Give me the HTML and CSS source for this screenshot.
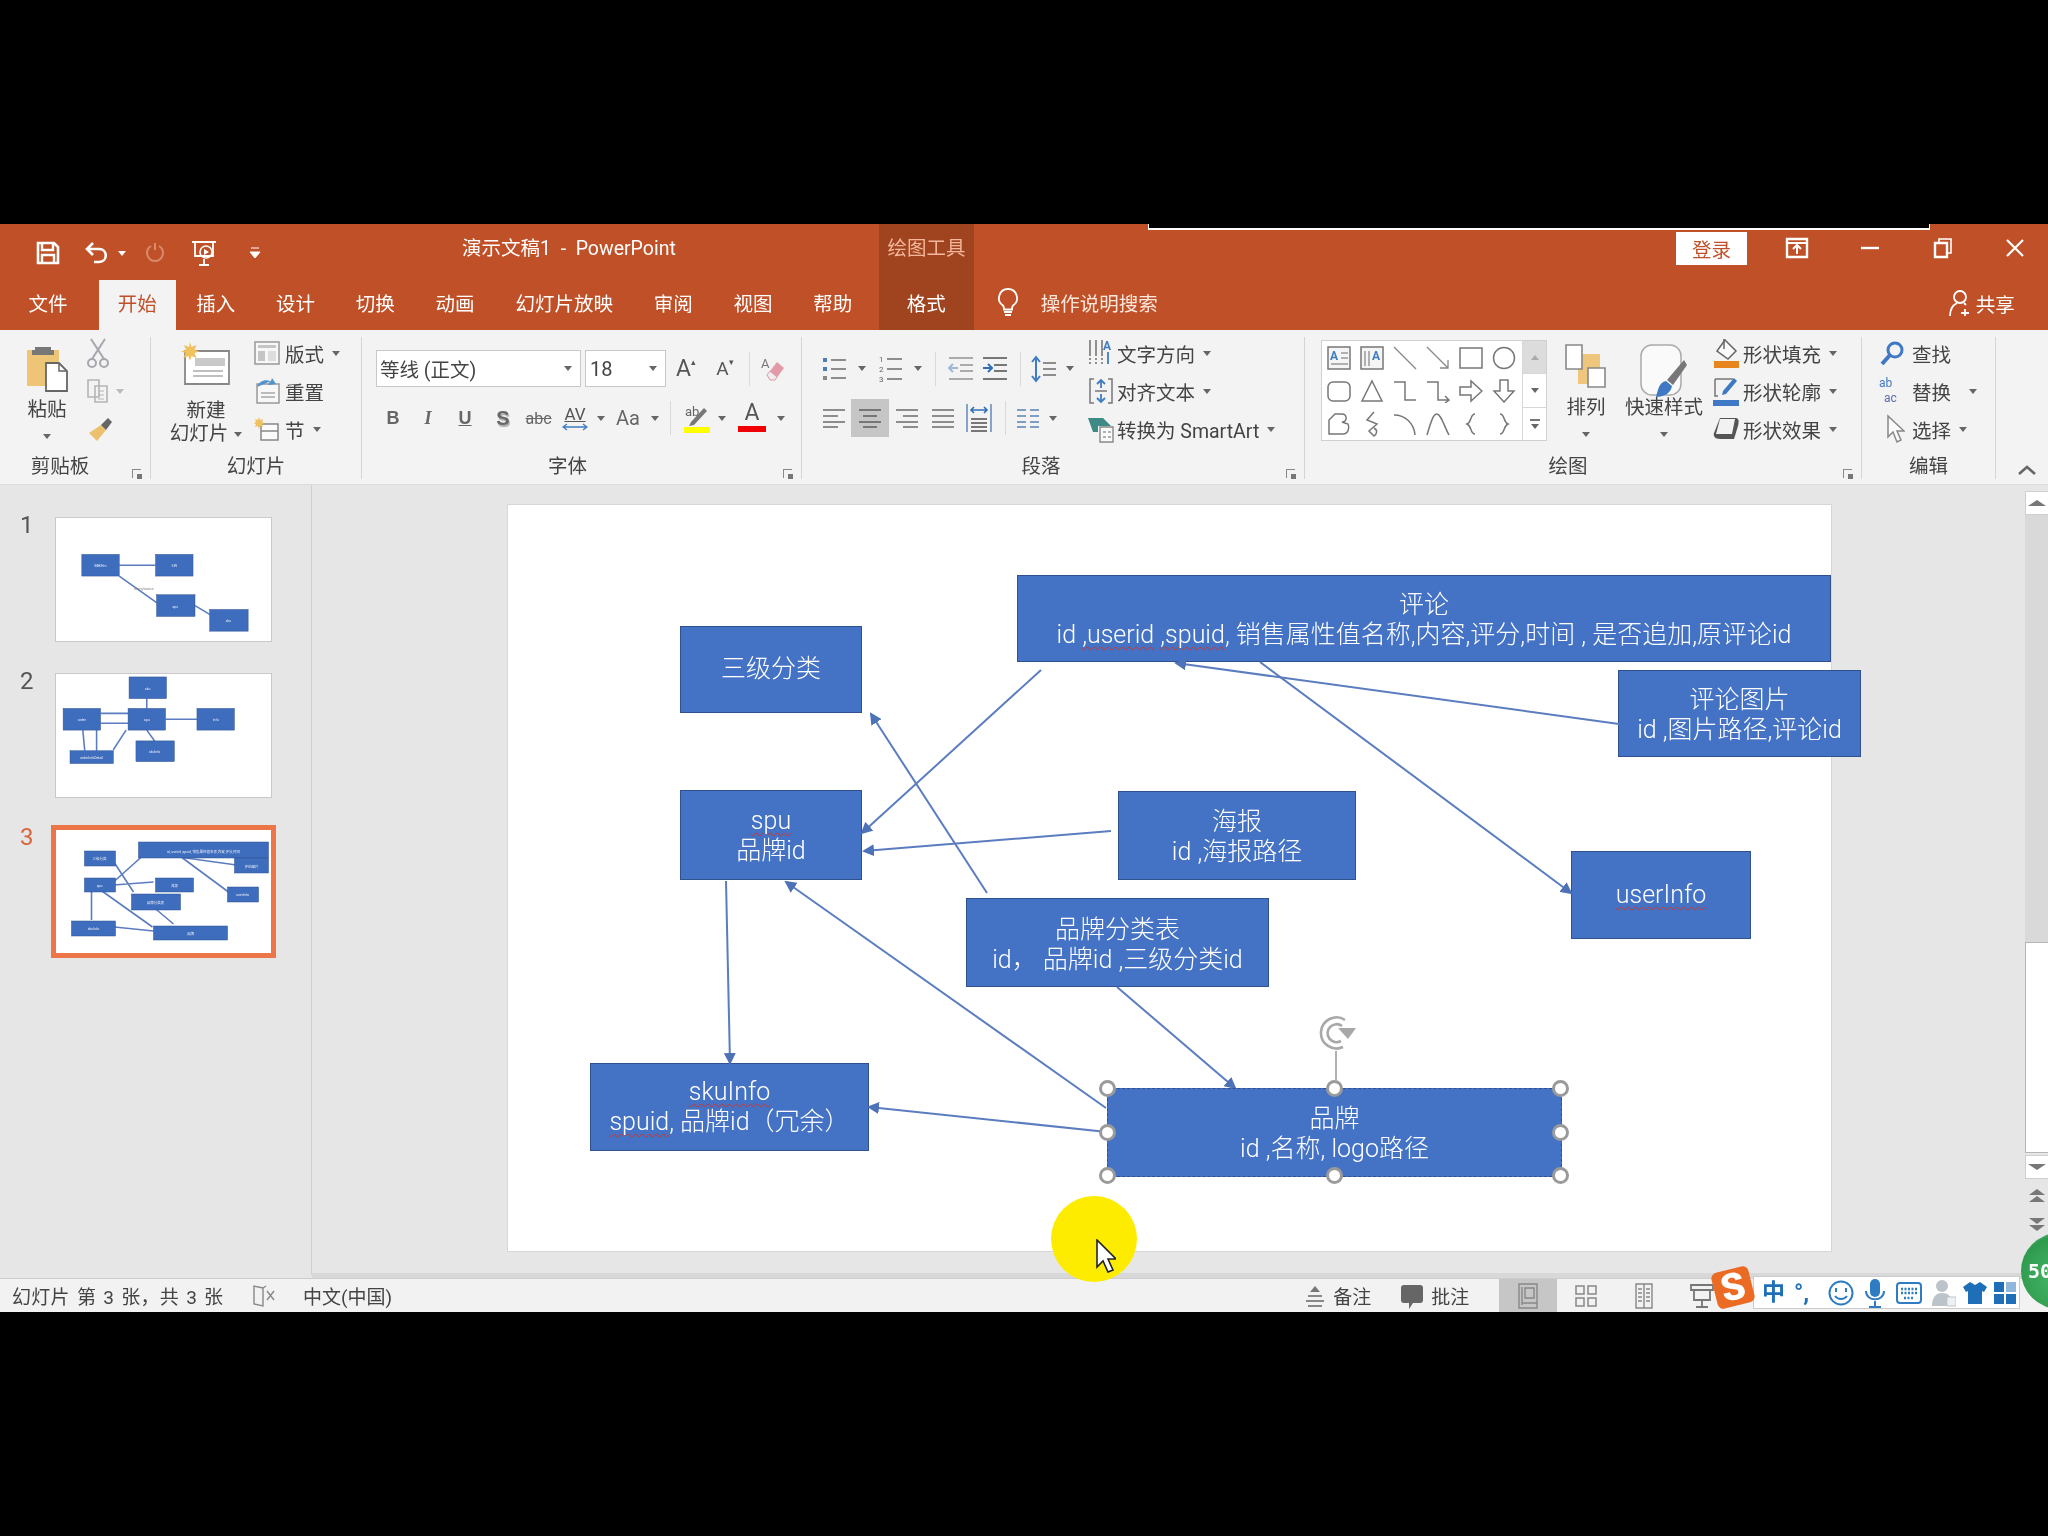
FILE: index.html
```html
<!DOCTYPE html>
<html lang="zh-CN">
<head>
    <meta charset="UTF-8">
    <title>演示文稿1 - PowerPoint</title>
    <link rel="stylesheet" href="styles.css">
</head>
<body>
<div class="window">
    <div class="topline"></div>

    <!-- 标题栏 -->
    <div class="titlebar">
        <div class="qat">
            <svg class="qat-save" width="24" height="24" viewBox="0 0 24 24"><path d="M2 2h16l4 4v16H2z" fill="none" stroke="#fff" stroke-width="2.6"/><path d="M6 2v7h11V2M6 22v-8h12v8" fill="none" stroke="#fff" stroke-width="2.4"/></svg>
            <svg class="qat-undo" width="26" height="24" viewBox="0 0 26 24"><path d="M8 2L2 8l6 6M3 8h11c9 0 9 13 0 13H9" fill="none" stroke="#fff" stroke-width="2.6"/></svg>
            <span class="qat-caret"></span>
            <svg class="qat-redo" width="20" height="24" viewBox="0 0 20 24"><path d="M6 5a8 8 0 1 0 8 0M10 2v7" fill="none" stroke="#d98a6c" stroke-width="2"/></svg>
            <svg class="qat-show" width="28" height="28" viewBox="0 0 28 28"><path d="M1 3h24M4 3v14h18V3M13 20v5M8 26h10" fill="none" stroke="#fff" stroke-width="1.8"/><circle cx="15" cy="13" r="6" fill="none" stroke="#fff" stroke-width="1.6"/><path d="M13 10l5 3-5 3z" fill="#fff"/></svg>
            <svg class="qat-more" width="12" height="14" viewBox="0 0 12 14"><path d="M2 2h8M1 6h10l-5 6z" fill="#fff" stroke="#fff"/></svg>
        </div>
        <div class="doc-title">演示文稿1&nbsp; -&nbsp; PowerPoint</div>
        <div class="context-head">绘图工具</div>
        <div class="win-ctrl">
            <button class="login">登录</button>
            <svg class="ctl-display" width="24" height="24" viewBox="0 0 24 24"><path d="M2 3h20v18H2z" fill="none" stroke="#fff" stroke-width="2.4"/><path d="M2 7h20" stroke="#fff" stroke-width="2"/><path d="M12 18v-8M8 13l4-4 4 4" fill="none" stroke="#fff" stroke-width="2"/></svg>
            <svg class="ctl-min" width="20" height="4" viewBox="0 0 20 4"><path d="M1 2h18" stroke="#fff" stroke-width="2.4"/></svg>
            <svg class="ctl-restore" width="20" height="22" viewBox="0 0 20 22"><path d="M2 6h12v14H2z" fill="none" stroke="#fff" stroke-width="2.4"/><path d="M6 6V2h12v14h-4" fill="none" stroke="#fff" stroke-width="1.6"/></svg>
            <svg class="ctl-close" width="20" height="20" viewBox="0 0 20 20"><path d="M2 2l16 16M18 2L2 18" stroke="#fff" stroke-width="2.2"/></svg>
        </div>
    </div>

    <!-- 选项卡 -->
    <div class="tabs">
        <a class="tab tab-file">文件</a>
        <a class="tab tab-active">开始</a>
        <a class="tab">插入</a>
        <a class="tab">设计</a>
        <a class="tab">切换</a>
        <a class="tab">动画</a>
        <a class="tab">幻灯片放映</a>
        <a class="tab">审阅</a>
        <a class="tab">视图</a>
        <a class="tab">帮助</a>
        <a class="tab tab-context">格式</a>
        <svg class="bulb" width="22" height="30" viewBox="0 0 22 30"><path d="M11 2a9 9 0 0 0-5 16.500c1 1 1 3 1 4h8c0-1 0-3 1-4A9 9 0 0 0 11 2z" fill="none" stroke="#fff" stroke-width="1.800"/><path d="M7 25h8M8 28h6" stroke="#fff" stroke-width="2"/></svg>
        <span class="tell-me">操作说明搜索</span>
        <div class="share">
            <svg width="26" height="28" viewBox="0 0 26 28"><circle cx="12" cy="8" r="6" fill="none" stroke="#fff" stroke-width="1.800"/><path d="M2 27c0-7 3-11 7-13M16 14l2 2M17 20v7M13 24h8" fill="none" stroke="#fff" stroke-width="1.800"/></svg>
            <span>共享</span>
        </div>
    </div>

    <!-- 功能区 -->
    <div class="ribbon">
        <section class="group g-clip">
            <div class="group-body">
                <div class="big-btn paste">
                    <svg class="big-icon" width="42" height="48" viewBox="0 0 42 48"><path d="M1 5h32v36H1z" fill="#eec477"/><path d="M9 5V2h16v3h3v5H6V5z" fill="#777"/><path d="M20 18h13l8 8v20H20z" fill="#fff" stroke="#666" stroke-width="1.800"/><path d="M33 18v8h8" fill="none" stroke="#666" stroke-width="1.500"/></svg>
                    <span class="big-label">粘贴</span>
                    <span class="big-caret"><i class="caret"></i></span>
                </div>
                <div class="col clip-tools">
                    <div class="row"><svg width="24" height="30" viewBox="0 0 24 30"><path d="M5 1l13 20M19 1L6 21" stroke="#a6a6ae" stroke-width="2" fill="none"/><circle cx="6" cy="25" r="4" fill="none" stroke="#a6a6ae" stroke-width="2"/><circle cx="18" cy="25" r="4" fill="none" stroke="#a6a6ae" stroke-width="2"/></svg></div>
                    <div class="row copy-row"><svg width="24" height="26" viewBox="0 0 24 26"><path d="M2 2h11v17H2zM9 8h12v16H9z" fill="#f3f3f3" stroke="#b5b5b5" stroke-width="1.600"/><path d="M12 13h6M12 17h6M12 21h6" stroke="#b5b5b5"/></svg><i class="caret caret-faint"></i></div>
                    <div class="row"><svg width="28" height="28" viewBox="0 0 28 28"><path d="M15 10l5 5-9 11L3 18z" fill="#ecc06d"/><path d="M15 10l7-7 4 4-6 8z" fill="#666"/></svg></div>
                </div>
            </div>
            <div class="group-label has-launcher">剪贴板<i class="launcher"></i></div>
        </section>

        <section class="group g-slides">
            <div class="group-body">
                <div class="big-btn new-slide">
                    <svg class="big-icon" width="50" height="44" viewBox="0 0 50 44"><path d="M4 9h44v33H4z" fill="#fff" stroke="#888" stroke-width="1.800"/><path d="M14 16h30v8H14z" fill="#c9c9c9"/><path d="M12 29h30M12 34h30" stroke="#aaa" stroke-width="1.500"/><path d="M9 0l1.500 5 5-2-2 5 5 1.500-5 1.500 2 5-5-2L9 19l-1.500-5-5 2 2-5L0 9.500l5-1.500-2-5 5 2z" fill="#f0c15c"/></svg>
                    <span class="big-label">新建</span>
                    <span class="big-label">幻灯片<i class="caret caret-in"></i></span>
                </div>
                <div class="col slide-tools">
                    <div class="row"><svg class="ico" width="26" height="24" viewBox="0 0 26 24"><path d="M1 1h24v22H1z" fill="#f7f7f7" stroke="#999" stroke-width="1.500"/><path d="M4 4h18v3H4zM4 10h7v10H4z" fill="#c5c5c5"/><path d="M14 10h8v10h-8z" fill="#ddd"/></svg><span>版式</span><i class="caret"></i></div>
                    <div class="row"><svg class="ico" width="26" height="26" viewBox="0 0 26 26"><path d="M3 6h22v19H3z" fill="#f7f7f7" stroke="#999" stroke-width="1.500"/><path d="M7 15h14M7 19h14" stroke="#bbb" stroke-width="2"/><path d="M3 9c2-6 8-8 13-6l-2 4 8-1-4-6-1 3" fill="#4f93cf"/></svg><span>重置</span></div>
                    <div class="row"><svg class="ico" width="26" height="26" viewBox="0 0 26 26"><path d="M7 8h17v16H7z" fill="#fbfbfb" stroke="#888" stroke-width="1.500"/><path d="M7 15h17" stroke="#888" stroke-width="1.500"/><path d="M5 1l1 3 3-1-1 3 3 1-3 1 1 3-3-1-1 3-1-3-3 1 1-3-3-1 3-1-1-3 3 1z" fill="#f0c15c"/></svg><span>节</span><i class="caret"></i></div>
                </div>
            </div>
            <div class="group-label">幻灯片</div>
        </section>

        <section class="group g-font">
            <div class="group-body stack">
                <div class="line font-line">
                    <div class="select font-name"><span>等线 (正文)</span><i class="caret"></i></div>
                    <div class="select font-size"><span>18</span><i class="caret"></i></div>
                    <span class="cell glyph-a">A<sup>▴</sup></span>
                    <span class="cell glyph-a glyph-small">A<sup>▾</sup></span>
                    <i class="sep"></i>
                    <span class="cell"><svg width="26" height="28" viewBox="0 0 26 28"><text x="1" y="13" class="eraser-a">A</text><path d="M7 20l10-13 7 6-9 12H10z" fill="#e29aa7"/><path d="M7 20l3-4 7 6-2 3h-5z" fill="#eee" stroke="#e29aa7"/></svg></span>
                </div>
                <div class="line format-line">
                    <span class="cell fmt fmt-b">B</span>
                    <span class="cell fmt fmt-i">I</span>
                    <span class="cell fmt fmt-u">U</span>
                    <span class="cell fmt fmt-s">S</span>
                    <span class="cell fmt-abc">abc</span>
                    <span class="cell av">AV<svg width="26" height="8" viewBox="0 0 26 8"><path d="M1 4h24M5 1L1 4l4 3M21 1l4 3-4 3" fill="none" stroke="#3f7cc0" stroke-width="1.300"/></svg></span>
                    <span class="cell"><i class="caret"></i></span>
                    <span class="cell fmt-aa">Aa</span>
                    <span class="cell"><i class="caret"></i></span>
                    <i class="sep"></i>
                    <span class="cell"><svg width="30" height="32" viewBox="0 0 30 32"><text x="3" y="14" class="hl-text">ab</text><path d="M9 20L22 6l3 3-13 14-5 1z" fill="#777"/><path d="M2 25h26v6H2z" fill="#ffff00"/></svg></span>
                    <span class="cell"><i class="caret"></i></span>
                    <span class="cell color-a">A</span>
                    <span class="cell"><i class="caret"></i></span>
                </div>
            </div>
            <div class="group-label has-launcher">字体<i class="launcher"></i></div>
        </section>

        <section class="group g-para">
            <div class="group-body para-body">
                <div class="stack para-left">
                    <div class="line para-line1">
                        <span class="cell"><svg width="26" height="26" viewBox="0 0 26 26"><path d="M9 4h15M9 13h15M9 22h15" stroke="#8d8d8d" stroke-width="2"/><path d="M1 2h4v4H1zM1 11h4v4H1z" fill="#4d7cb8"/><path d="M1 20h4v4H1z" fill="#888"/></svg></span>
                        <span class="cell"><i class="caret"></i></span>
                        <span class="cell"><svg width="26" height="30" viewBox="0 0 26 30"><path d="M9 5h15M9 15h15M9 25h15" stroke="#8d8d8d" stroke-width="2"/><text x="1" y="8" class="num-mark">1</text><text x="1" y="18" class="num-mark">2</text><text x="1" y="28" class="num-mark">3</text></svg></span>
                        <span class="cell"><i class="caret"></i></span>
                        <i class="sep"></i>
                        <span class="cell"><svg width="26" height="26" viewBox="0 0 26 26"><path d="M1 2h24M12 9h13M12 15h13M1 23h24" stroke="#aaa" stroke-width="2"/><path d="M10 12H2M5 8l-4 4 4 4" fill="none" stroke="#9fb8d6" stroke-width="2"/></svg></span>
                        <span class="cell"><svg width="26" height="26" viewBox="0 0 26 26"><path d="M1 2h24M12 9h13M12 15h13M1 23h24" stroke="#777" stroke-width="2"/><path d="M1 12h8M6 8l4 4-4 4" fill="none" stroke="#2f6fb5" stroke-width="2"/></svg></span>
                        <i class="sep"></i>
                        <span class="cell"><svg width="26" height="28" viewBox="0 0 26 28"><path d="M12 8h13M12 14h13M12 20h13" stroke="#8d8d8d" stroke-width="2"/><path d="M5 3v22M1 7l4-5 4 5M1 21l4 5 4-5" fill="none" stroke="#3f7cc0" stroke-width="2"/></svg></span>
                        <span class="cell"><i class="caret"></i></span>
                    </div>
                    <div class="line para-line2">
                        <span class="cell"><svg width="22" height="20" viewBox="0 0 22 20"><path d="M0 2h22M0 8h15M0 14h22M0 19h15" stroke="#8d8d8d" stroke-width="1.800"/></svg></span>
                        <span class="cell align-on"><svg width="22" height="20" viewBox="0 0 22 20"><path d="M0 2h22M4 8h14M0 14h22M4 19h14" stroke="#777" stroke-width="1.800"/></svg></span>
                        <span class="cell"><svg width="22" height="20" viewBox="0 0 22 20"><path d="M0 2h22M7 8h15M0 14h22M7 19h15" stroke="#8d8d8d" stroke-width="1.800"/></svg></span>
                        <span class="cell"><svg width="22" height="20" viewBox="0 0 22 20"><path d="M0 2h22M0 8h22M0 14h22M0 19h22" stroke="#8d8d8d" stroke-width="1.800"/></svg></span>
                        <span class="cell"><svg width="26" height="30" viewBox="0 0 26 30"><path d="M1 1v28M25 1v28" stroke="#7a9cc6" stroke-width="1.800"/><path d="M5 16h16M5 20h16M5 24h16M5 28h16" stroke="#777" stroke-width="1.800"/><path d="M5 7h16M8 4L5 7l3 3M18 4l3 3-3 3" fill="none" stroke="#2f6fb5" stroke-width="1.600"/></svg></span>
                        <i class="sep"></i>
                        <span class="cell"><svg width="22" height="20" viewBox="0 0 22 20"><path d="M0 2h9M13 2h9M0 8h9M13 8h9M0 14h9M13 14h9M0 19h9M13 19h9" stroke="#7f9ec4" stroke-width="1.800"/></svg></span>
                        <span class="cell"><i class="caret"></i></span>
                    </div>
                </div>
                <div class="col para-right">
                    <div class="row"><svg class="ico" width="26" height="30" viewBox="0 0 26 30"><path d="M2 2v24M8 2v24M14 2v24" stroke="#777" stroke-width="1.600" stroke-dasharray="16 2 2 2"/><text x="15" y="12" class="dir-a">A</text><path d="M20 14v12" stroke="#3f7cc0" stroke-width="1.800"/></svg><span>文字方向</span><i class="caret"></i></div>
                    <div class="row"><svg class="ico" width="26" height="28" viewBox="0 0 26 28"><path d="M6 2H2v24h4M20 2h4v24h-4" fill="none" stroke="#777" stroke-width="1.500"/><path d="M13 3v8M9 7l4-4 4 4M13 25v-8M9 21l4 4 4-4" fill="none" stroke="#3f7cc0" stroke-width="1.800"/><path d="M7 14h12" stroke="#777" stroke-width="1.500"/></svg><span>对齐文本</span><i class="caret"></i></div>
                    <div class="row"><svg class="ico" width="26" height="30" viewBox="0 0 26 30"><path d="M0 4h15l8 8H10v6H5z" fill="#3e8a84"/><path d="M12 13h13v15H12z" fill="#fafafa" stroke="#888" stroke-width="1.400"/><path d="M15 18h3M20 18h3M15 23h3M20 23h3" stroke="#999" stroke-width="1.500"/></svg><span>转换为 SmartArt</span><i class="caret"></i></div>
                </div>
            </div>
            <div class="group-label has-launcher">段落<i class="launcher"></i></div>
        </section>

        <section class="group g-draw">
            <div class="group-body draw-body">
                <div class="gallery">
                    <div class="shapes">
                        <svg width="24" height="24" viewBox="0 0 24 24"><path d="M1 1h22v22H1z" fill="#f5f5f5" stroke="#777" stroke-width="1.500"/><path d="M14 7h7M14 12h7M4 18h17" stroke="#999" stroke-width="1.500"/><text x="3" y="14" class="dir-a">A</text></svg>
                        <svg width="24" height="24" viewBox="0 0 24 24"><path d="M1 1h22v22H1z" fill="#f5f5f5" stroke="#777" stroke-width="1.500"/><path d="M5 5v15M9 5v15" stroke="#999" stroke-width="1.500"/><text x="12" y="14" class="dir-a">A</text></svg>
                        <svg width="24" height="24" viewBox="0 0 24 24"><path d="M1 1l22 22" stroke="#888" stroke-width="1.300"/></svg>
                        <svg width="24" height="24" viewBox="0 0 24 24"><path d="M1 1l21 21M22 14v8h-8" fill="none" stroke="#888" stroke-width="1.300"/></svg>
                        <svg width="26" height="24" viewBox="0 0 26 24"><path d="M2 2h22v20H2z" fill="none" stroke="#777" stroke-width="1.500"/></svg>
                        <svg width="24" height="24" viewBox="0 0 24 24"><circle cx="12" cy="12" r="10.500" fill="none" stroke="#777" stroke-width="1.500"/></svg>
                        <svg width="26" height="24" viewBox="0 0 26 24"><rect x="2" y="3" width="22" height="19" rx="5" fill="none" stroke="#777" stroke-width="1.500"/></svg>
                        <svg width="24" height="24" viewBox="0 0 24 24"><path d="M12 2l10 20H2z" fill="none" stroke="#777" stroke-width="1.500"/></svg>
                        <svg width="24" height="24" viewBox="0 0 24 24"><path d="M1 3h11v18h11" fill="none" stroke="#777" stroke-width="1.500"/></svg>
                        <svg width="24" height="24" viewBox="0 0 24 24"><path d="M1 3h11v18h10M19 17l4 4-4 3" fill="none" stroke="#777" stroke-width="1.500"/></svg>
                        <svg width="24" height="24" viewBox="0 0 24 24"><path d="M1 8h11V2l11 10-11 10v-6H1z" fill="none" stroke="#777" stroke-width="1.500"/></svg>
                        <svg width="24" height="24" viewBox="0 0 24 24"><path d="M8 1h8v11h6L12 23 2 12h6z" fill="none" stroke="#777" stroke-width="1.500"/></svg>
                        <svg width="24" height="24" viewBox="0 0 24 24"><path d="M2 22V8l6-6h7c5 0 6 8 0 8l6 2c2 4 0 10-5 10z" fill="none" stroke="#777" stroke-width="1.500"/></svg>
                        <svg width="20" height="26" viewBox="0 0 20 26"><path d="M12 1L5 9l10 4-8 7 5 5c3-2 4-6 0-8" fill="none" stroke="#777" stroke-width="1.500"/></svg>
                        <svg width="24" height="24" viewBox="0 0 24 24"><path d="M1 3c11 0 20 8 21 20" fill="none" stroke="#777" stroke-width="1.500"/></svg>
                        <svg width="24" height="24" viewBox="0 0 24 24"><path d="M1 23C5 10 7 2 11 2s7 12 12 21" fill="none" stroke="#777" stroke-width="1.500"/></svg>
                        <svg width="14" height="24" viewBox="0 0 14 24"><path d="M11 2C6 2 8 10 3 12c5 2 3 10 8 10" fill="none" stroke="#777" stroke-width="1.500"/></svg>
                        <svg width="14" height="24" viewBox="0 0 14 24"><path d="M3 2c5 0 3 8 8 10-5 2-3 10-8 10" fill="none" stroke="#777" stroke-width="1.500"/></svg>
                    </div>
                    <div class="gallery-scroll">
                        <span class="gs gs-up"><i class="caret caret-up"></i></span>
                        <span class="gs"><i class="caret"></i></span>
                        <span class="gs gs-more"><i class="bar"></i><i class="caret"></i></span>
                    </div>
                </div>
                <div class="big-btn arrange">
                    <svg class="big-icon" width="44" height="44" viewBox="0 0 44 44"><path d="M14 10h22v30H14z" fill="#efc77c"/><path d="M2 1h16v24H2z" fill="#fff" stroke="#888" stroke-width="1.600"/><path d="M24 24h17v19H24z" fill="#fff" stroke="#888" stroke-width="1.600"/></svg>
                    <span class="big-label">排列</span>
                    <span class="big-caret"><i class="caret"></i></span>
                </div>
                <div class="big-btn quick">
                    <svg class="big-icon" width="48" height="54" viewBox="0 0 48 54"><rect x="1" y="1" width="40" height="50" rx="11" fill="#fafafa" stroke="#aaa" stroke-width="1.500"/><path d="M44 16L27 36l6 5 14-20z" fill="#777"/><path d="M16 53c8 0 15-4 16-11l-6-5c-7 1-8 9-10 16z" fill="#3f78c4"/></svg>
                    <span class="big-label">快速样式</span>
                    <span class="big-caret"><i class="caret"></i></span>
                </div>
                <div class="col shape-style">
                    <div class="row"><svg class="ico" width="28" height="30" viewBox="0 0 28 30"><path d="M13 2l11 11-8 8-11-8z" fill="#fafafa" stroke="#666" stroke-width="1.500"/><path d="M12 1v10" stroke="#666" stroke-width="1.500"/><path d="M2 23h25v7H2z" fill="#e8861e"/></svg><span>形状填充</span><i class="caret"></i></div>
                    <div class="row"><svg class="ico" width="28" height="30" viewBox="0 0 28 30"><path d="M3 3h18M3 3v17h3" fill="none" stroke="#777" stroke-width="1.500"/><path d="M22 2l3 3-11 13-4 1 1-4z" fill="#3f78c4"/><path d="M1 24h26v6H1z" fill="#3f78c4"/></svg><span>形状轮廓</span><i class="caret"></i></div>
                    <div class="row"><svg class="ico" width="28" height="26" viewBox="0 0 28 26"><path d="M8 2h16c3 0 3 4 2 8l-4 13H8c-5 0-7-3-6-6z" fill="#555"/><path d="M8 3h15l-3 15H4z" fill="#f2f2f2"/></svg><span>形状效果</span><i class="caret"></i></div>
                </div>
            </div>
            <div class="group-label has-launcher draw-label">绘图<i class="launcher"></i></div>
        </section>

        <section class="group g-edit">
            <div class="group-body">
                <div class="col edit-col">
                    <div class="row"><svg class="ico" width="26" height="26" viewBox="0 0 26 26"><circle cx="16" cy="10" r="7" fill="none" stroke="#3f78c4" stroke-width="3"/><path d="M11 15L3 24" stroke="#3f78c4" stroke-width="4"/></svg><span>查找</span></div>
                    <div class="row"><span class="ico abac"><b>ab</b><b class="ac">ac</b></span><span>替换</span><i class="caret caret-far"></i></div>
                    <div class="row"><svg class="ico" width="26" height="30" viewBox="0 0 26 30"><path d="M9 2v21l5-5 4 10 4-2-4-9h7z" fill="#fafafa" stroke="#888" stroke-width="1.500"/></svg><span>选择</span><i class="caret"></i></div>
                </div>
            </div>
            <div class="group-label">编辑</div>
        </section>

        <svg class="collapse" width="20" height="12" viewBox="0 0 20 12"><path d="M2 10l8-7 8 7" fill="none" stroke="#666" stroke-width="2.500"/></svg>
    </div>

    <!-- 主区域 -->
    <div class="main">
        <aside class="thumbs">
            <div class="thumb-row">
                <span class="thumb-no">1</span>
                <svg class="thumb" viewBox="0 0 216 125">
                    <path class="tl" d="M63 48h37M63 59l38 27M140 89l15 9"/>
                    <rect class="tb" x="25" y="37" width="38" height="22"/><rect class="tb" x="100" y="37" width="38" height="22"/><rect class="tb" x="101" y="78" width="39" height="22"/><rect class="tb" x="155" y="93" width="39" height="22"/>
                    <text class="tt" x="44" y="50">BBKHm</text><text class="tt" x="119" y="50">SIN</text><text class="tt" x="120" y="91">spu</text><text class="tt" x="174" y="106">sku</text>
                    <text class="tg" x="88" y="73">Manytoone</text>
                </svg>
            </div>
            <div class="thumb-row">
                <span class="thumb-no">2</span>
                <svg class="thumb" viewBox="0 0 216 125">
                    <path class="tl" d="M44 40h28M44 50h28M26 57l2 21M40 57v21M70 57L57 77M91 57l8 11M110 46h32M91 25v10"/>
                    <rect class="tb" x="73" y="3" width="38" height="22"/><rect class="tb" x="6" y="35" width="38" height="22"/><rect class="tb" x="72" y="35" width="38" height="22"/><rect class="tb" x="142" y="35" width="38" height="22"/><rect class="tb" x="13" y="78" width="44" height="13"/><rect class="tb" x="80" y="68" width="39" height="21"/>
                    <text class="tt" x="92" y="16">sku</text><text class="tt" x="25" y="48">order</text><text class="tt" x="91" y="48">spu</text><text class="tt" x="161" y="48">info</text><text class="tt" x="35" y="86">orderInfoDetail</text><text class="tt" x="99" y="80">skuInfo</text>
                </svg>
            </div>
            <div class="thumb-row thumb-current">
                <span class="thumb-no">3</span>
                <svg class="thumb" viewBox="0 0 216 125">
                    <path class="tl" d="M87 27L58 53M123 26l50 37M181 36l-72-10M98 53l-40 3M78 63L59 34M99 79l19 16M36 61v30M97 98L45 61M98 102l-39-4"/>
                    <rect class="tb" x="29" y="22" width="31" height="15"/><rect class="tb" x="83" y="13" width="130" height="16"/><rect class="tb" x="179" y="29" width="34" height="15"/><rect class="tb" x="29" y="49" width="31" height="14"/><rect class="tb" x="100" y="49" width="38" height="14"/><rect class="tb" x="172" y="58" width="31" height="15"/><rect class="tb" x="76" y="65" width="49" height="16"/><rect class="tb" x="16" y="92" width="44" height="15"/><rect class="tb" x="98" y="97" width="74" height="14"/>
                    <text class="tt" x="44" y="31">三级分类</text><text class="tt" x="148" y="24">id ,userid ,spuid, 销售属性值名称,内容,评分,时间</text><text class="tt" x="196" y="39">评论图片</text><text class="tt" x="44" y="58">spu</text><text class="tt" x="119" y="58">海报</text><text class="tt" x="187" y="67">userInfo</text><text class="tt" x="100" y="75">品牌分类表</text><text class="tt" x="38" y="101">skuInfo</text><text class="tt" x="135" y="106">品牌</text>
                </svg>
            </div>
        </aside>

        <div class="canvas">
            <div class="slide">
                <svg class="links" width="1323" height="746" viewBox="0 0 1323 746">
                    <defs>
                        <marker id="tip" markerWidth="6" markerHeight="6" refX="5" refY="3" orient="auto"><path d="M0 0l6 3-6 3z" fill="#4e72b8"/></marker>
                    </defs>
                    <g class="link">
                        <path d="M533 165L354 328" marker-end="url(#tip)"/>
                        <path d="M752 157L1063 388" marker-end="url(#tip)"/>
                        <path d="M1111 219L668 158" marker-end="url(#tip)"/>
                        <path d="M603 326L356 346" marker-end="url(#tip)"/>
                        <path d="M479 388L363 209" marker-end="url(#tip)"/>
                        <path d="M609 482L727 583" marker-end="url(#tip)"/>
                        <path d="M218 376L222 558" marker-end="url(#tip)"/>
                        <path d="M598 603L278 377" marker-end="url(#tip)"/>
                        <path d="M599 627L361 602" marker-end="url(#tip)"/>
                    </g>
                </svg>
                <div class="node n-comment">评论<br>id <span class="sq">,userid</span> <span class="sq">,spuid</span>, 销售属性值名称,内容,评分,时间 , 是否追加,原评论id</div>
                <div class="node n-cat3">三级分类</div>
                <div class="node n-comment-img">评论图片<br>id ,图片路径,评论id</div>
                <div class="node n-spu"><span class="sq">spu</span><br>品牌id</div>
                <div class="node n-poster">海报<br>id ,海报路径</div>
                <div class="node n-user"><span class="sq">userInfo</span></div>
                <div class="node n-brandcat">品牌分类表<br>id， 品牌id ,三级分类id</div>
                <div class="node n-sku"><span class="sq">skuInfo</span><br><span class="sq">spuid</span>, 品牌id（冗余）</div>
                <div class="node n-brand">
                    品牌<br>id ,名称, logo路径
                    <i class="handle h-tl"></i><i class="handle h-tc"></i><i class="handle h-tr"></i>
                    <i class="handle h-ml"></i><i class="handle h-mr"></i>
                    <i class="handle h-bl"></i><i class="handle h-bc"></i><i class="handle h-br"></i>
                    <i class="stem"></i>
                    <svg class="rotate" width="40" height="36" viewBox="0 0 40 36"><path d="M28 5A15.500 15.500 0 1 0 26 32" fill="none" stroke="#a8a8a8" stroke-width="2.600"/><path d="M25 11A9 9 0 1 0 24 26" fill="none" stroke="#a8a8a8" stroke-width="2.600"/><path d="M21 13h18l-8 11z" fill="#a8a8a8"/></svg>
                </div>
            </div>
            <div class="vscroll">
                <span class="vs-btn"><i class="tri tri-up"></i></span>
                <span class="vs-track"></span>
                <span class="vs-thumb"></span>
                <span class="vs-btn"><i class="tri tri-down"></i></span>
                <span class="vs-page"><i class="tri tri-up"></i><i class="tri tri-up"></i></span>
                <span class="vs-page"><i class="tri tri-down"></i><i class="tri tri-down"></i></span>
            </div>
        </div>
    </div>

    <!-- 状态栏 -->
    <div class="status">
        <span class="st-count">幻灯片 第 3 张，共 3 张</span>
        <svg class="st-book" width="24" height="24" viewBox="0 0 24 24"><path d="M11 4L2 2v18l9 2zM11 4l3-2" fill="none" stroke="#888" stroke-width="1.400"/><path d="M15 7l7 9M22 7l-7 9" stroke="#888" stroke-width="1.400"/></svg>
        <span class="st-lang">中文(中国)</span>
        <div class="st-right">
            <span class="st-btn"><svg width="20" height="24" viewBox="0 0 20 24"><path d="M10 2l5 6H5z" fill="#777"/><path d="M3 12h14M1 17h18M3 22h14" stroke="#888" stroke-width="1.800"/></svg>备注</span>
            <span class="st-btn"><svg width="22" height="26" viewBox="0 0 22 26"><path d="M3 2h16c2 0 3 1 3 3v12c0 2-1 3-3 3h-7l-4 6v-6H3c-2 0-3-1-3-3V5c0-2 1-3 3-3z" fill="#666"/></svg>批注</span>
            <span class="view view-on"><svg width="20" height="26" viewBox="0 0 20 26"><path d="M1 1h18v24H1zM4 4v18M4 20h15" fill="none" stroke="#888" stroke-width="1.400"/><path d="M7 5h9v10H7z" fill="none" stroke="#888" stroke-width="1.400"/></svg></span>
            <span class="view"><svg width="22" height="22" viewBox="0 0 22 22"><path d="M1 1h8v8H1zM13 1h8v8h-8zM1 13h8v8H1zM13 13h8v8h-8z" fill="none" stroke="#888" stroke-width="1.500"/></svg></span>
            <span class="view"><svg width="18" height="26" viewBox="0 0 18 26"><path d="M1 1h16v24H1zM9 1v24M3 6h4M3 10h4M3 14h4M3 18h4M11 6h4M11 10h4M11 14h4M11 18h4" fill="none" stroke="#888" stroke-width="1.400"/></svg></span>
            <span class="view"><svg width="24" height="26" viewBox="0 0 24 26"><path d="M1 2h22v5H1zM4 7h16v10H4zM12 17v6M6 24h12" fill="none" stroke="#777" stroke-width="1.800"/></svg></span>
        </div>
    </div>

    <!-- 输入法状态条 -->
    <div class="ime">
        <span class="ime-zh">中</span>
        <span class="ime-punct">°,</span>
        <svg width="26" height="26" viewBox="0 0 26 26"><circle cx="13" cy="13" r="11.500" fill="none" stroke="#2f7cc2" stroke-width="2"/><path d="M8 8v4M18 8v4M7 16c3 4 9 4 12 0" fill="none" stroke="#2f7cc2" stroke-width="2"/></svg>
        <svg width="22" height="30" viewBox="0 0 22 30"><rect x="6" y="1" width="10" height="18" rx="5" fill="#2f7cc2"/><path d="M2 13c0 11 18 11 18 0M11 23v5M5 29h12" fill="none" stroke="#2f7cc2" stroke-width="2"/></svg>
        <svg width="26" height="22" viewBox="0 0 26 22"><rect x="1" y="1" width="24" height="20" rx="3" fill="none" stroke="#2f7cc2" stroke-width="2"/><path d="M5 7h16M5 11h16M8 16h10" stroke="#2f7cc2" stroke-width="2.400" stroke-dasharray="2 1.500"/></svg>
        <svg width="24" height="28" viewBox="0 0 24 28"><circle cx="10" cy="7" r="6" fill="#bcc3ca"/><path d="M0 27c0-9 4-13 10-13s8 3 9 6v7z" fill="#bcc3ca"/><path d="M15 18h9v9h-9z" fill="#eef1f4" stroke="#bcc3ca"/></svg>
        <svg class="ime-shirt" width="24" height="24" viewBox="0 0 24 24"><path d="M7 1l5 3 5-3 7 5-3 5-2-1v13H5V10l-2 1-3-5z" fill="#1f6fb8"/></svg>
        <svg class="ime-grid" width="22" height="22" viewBox="0 0 22 22"><path d="M0 0h10v10H0zM0 12h10v10H0zM12 12h10v10H12z" fill="#1f6fb8"/><path d="M12 0h10v10H12z" fill="#8fb8dc"/></svg>
    </div>
    <div class="sogou">S</div>
    <div class="badge">50</div>

    <!-- 鼠标高亮 -->
    <div class="spot"></div>
    <svg class="pointer" width="20" height="34" viewBox="0 0 20 34"><path d="M1 1v27l6-6 5 11 5-2-5-11h8z" fill="#fff" stroke="#222" stroke-width="1.600"/></svg>
</div>
</body>
</html>
```

FILE: styles.css
```css
*{
    box-sizing: border-box;
}
html,body{
    margin:0;
    height:100%;
    background-color: #000;
}
body{
    padding-top:224px;
    font-family: Roboto, "Noto Sans CJK SC", sans-serif;
    overflow: hidden;
}
.window{
    position: relative;
    width:2048px;
    height:1088px;
    overflow: hidden;
    background-color: #e6e6e6;
    color:#444;
    font-size:19.5px;
    filter: blur(0.7px);
}
.topline{
    position: absolute;
    left:1148px;
    top:0;
    width:782px;
    height:6px;
    background-color: #000;
    border-bottom:2px solid #fff;
    border-left:1px solid #fff;
    border-right:1px solid #fff;
    z-index:3;
}
svg{
    flex:none;
}

/* 标题栏 */
.titlebar{
    display: flex;
    height:56px;
    background-color: #bf5027;
    color:#fff;
}
.qat{
    display: flex;
    align-items: center;
    width:462px;
    padding:2px 0 0 36px;
}
.qat-undo{
    margin-left:25px;
}
.qat-caret{
    width:0;
    height:0;
    margin-left:7px;
    border-left:4px solid transparent;
    border-right:4px solid transparent;
    border-top:5px solid #fff;
}
.qat-redo{
    margin-left:19px;
}
.qat-show{
    margin-left:26px;
}
.qat-more{
    margin-left:30px;
}
.doc-title{
    width:417px;
    line-height:50px;
}
.context-head{
    width:95px;
    background-color: #a0431f;
    color:#f4b79c;
    line-height:50px;
    text-align: center;
}
.win-ctrl{
    flex:1;
    display: flex;
    align-items: center;
    padding:0 0 8px 702px;
}
.login{
    width:71px;
    height:33px;
    border:0;
    padding:0;
    background-color: #fff;
    color:#c0502a;
    font:inherit;
}
.ctl-display{
    margin-left:38px;
}
.ctl-min{
    margin-left:51px;
}
.ctl-restore{
    margin-left:53px;
}
.ctl-close{
    margin-left:52px;
}

/* 选项卡 */
.tabs{
    display: flex;
    height:50px;
    padding-left:8px;
    background-color: #bf5027;
    color:#fff;
}
.tab{
    flex:none;
    padding:0 20.4px;
    line-height:50px;
    white-space: nowrap;
}
.tab-file{
    margin-right:11px;
}
.tab-active{
    width:77px;
    padding:0 19px;
    background-color: #f3f3f3;
    color:#c0502a;
}
.tab-context{
    width:95px;
    margin-left:6px;
    padding:0 28px;
    background-color: #a0431f;
}
.bulb{
    margin:7px 0 0 23px;
}
.tell-me{
    flex:none;
    margin-left:22px;
    line-height:50px;
    color:#fbe6dc;
}
.share{
    flex:none;
    display: flex;
    align-items: center;
    margin-left:790px;
    height:46px;
    gap:2px;
}

/* 功能区 */
.ribbon{
    display: flex;
    height:155px;
    background-color: #f3f3f3;
    border-bottom:1px solid #dcdcdc;
}
.group{
    display: flex;
    flex-direction: column;
    flex:none;
    height:142px;
    margin-top:7px;
    border-right:1px solid #d4d4d4;
}
.g-clip{
    width:151px;
}
.g-slides{
    width:211px;
}
.g-font{
    width:440px;
}
.g-para{
    width:503px;
}
.g-draw{
    width:557px;
}
.g-edit{
    width:134px;
}
.group-body{
    display: flex;
    flex:none;
    height:116px;
    margin-top:-2px;
}
.group-label{
    position: relative;
    flex:none;
    height:26px;
    margin-top:3px;
    line-height:26px;
    text-align: center;
}
.g-clip .group-label{
    padding-right:30px;
}
.g-font .group-label{
    padding-right:28px;
}
.g-para .group-label{
    padding-right:24px;
}
.g-draw .group-label{
    padding-right:30px;
}
.launcher{
    position: absolute;
    right:9px;
    bottom:2px;
    width:9px;
    height:9px;
    border-left:1px solid #888;
    border-top:1px solid #888;
}
.launcher::after{
    content: "";
    position: absolute;
    right:-1px;
    bottom:-1px;
    width:5px;
    height:5px;
    background-color: #777;
}
.col{
    display: flex;
    flex-direction: column;
    margin-top:-1px;
}
.row{
    display: flex;
    align-items: center;
    height:38px;
    white-space: nowrap;
}
.ico{
    margin-right:5px;
}
.caret{
    display: inline-block;
    flex:none;
    width:0;
    height:0;
    margin-left:8px;
    border-left:4px solid transparent;
    border-right:4px solid transparent;
    border-top:5px solid #666;
}
.cell .caret{
    margin-left:0;
}
.caret-faint{
    border-top-color: #bbb;
}
.caret-in{
    margin-left:6px;
    vertical-align: middle;
}
.caret-far{
    margin-left:18px;
}
.caret-up{
    border-top:0;
    border-bottom:5px solid #aaa;
}
.big-btn{
    display: flex;
    flex-direction: column;
    align-items: center;
    flex:none;
}
.big-label{
    display: block;
    height:23px;
    line-height:23px;
    white-space: nowrap;
}
.big-caret{
    height:24px;
    line-height:24px;
}
.big-caret .caret{
    margin-left:0;
}
.paste{
    width:60px;
    margin-left:17px;
    padding-top:10px;
}
.paste .big-label{
    margin-top:5px;
}
.clip-tools{
    width:40px;
    margin-left:9px;
}
.copy-row .caret{
    margin-left:6px;
}
.new-slide{
    width:74px;
    margin-left:18px;
    padding-top:7px;
}
.new-slide .big-icon{
    margin-bottom:13px;
}
.slide-tools{
    margin-left:11px;
}

/* 字体、段落 */
.stack{
    display: flex;
    flex-direction: column;
    gap:12px;
    padding-top:15px;
}
.g-font .stack{
    padding-left:14px;
}
.line{
    display: grid;
    align-items: center;
    height:37px;
}
.cell{
    display: flex;
    align-items: center;
    justify-content: center;
    height:100%;
}
.font-line{
    grid-template-columns: 209px 81px 40px 38px 10px 38px;
    width:420px;
}
.select{
    display: flex;
    align-items: center;
    justify-content: space-between;
    height:37px;
    padding:0 8px 0 3px;
    background-color: #fff;
    border:1px solid #c8c8c8;
}
.font-name{
    margin-right:4px;
}
.font-size{
    width:81px;
    padding-left:4px;
    font-size:20px;
}
.select .caret{
    margin-left:0;
}
.glyph-a{
    font-size:23px;
    color:#555;
}
.glyph-a sup{
    font-size:9px;
    line-height:1;
    align-self: flex-start;
    margin-top:8px;
}
.glyph-small{
    font-size:19px;
}
.sep{
    justify-self: center;
    display: block;
    width:1px;
    height:34px;
    background-color: #d9d9d9;
}
.eraser-a{
    font-size:13px;
    fill:#777;
}
.format-line{
    grid-template-columns: 34px 36px 38px 38px 33px 40px 12px 42px 12px 18px 36px 14px 46px 12px;
    height:38px;
    margin-right:-20px;
}
.fmt{
    font-weight: bold;
    font-size:18px;
    color:#666;
}
.fmt-b{
    font-family: "Liberation Sans", sans-serif;
}
.fmt-i{
    font-family: "Liberation Serif", serif;
    font-style: italic;
}
.fmt-u{
    text-decoration: underline;
    font-family: "Liberation Sans", sans-serif;
}
.fmt-s{
    font-family: "Liberation Sans", sans-serif;
    font-size:20px;
    text-shadow: 1px 2px 1px #aaa;
}
.fmt-abc{
    font-size:16px;
    text-decoration: line-through;
    color:#666;
}
.av{
    flex-direction: column;
    font-size:17px;
    line-height:18px;
    text-decoration: underline;
    color:#555;
}
.fmt-aa{
    font-size:20px;
    color:#666;
}
.hl-text{
    font-size:13px;
    fill:#666;
}
.color-a{
    flex-direction: column;
    justify-content: flex-start;
    padding-top:1px;
    font-size:23px;
    line-height:26px;
    color:#555;
}
.color-a::after{
    content: "";
    width:28px;
    height:6px;
    background-color: #f00000;
}
.para-body{
    padding-left:15px;
}
.para-left{
    width:271px;
}
.para-line1{
    grid-template-columns: 36px 18px 40px 14px 20px 32px 36px 14px 34px 18px;
}
.para-line2{
    grid-template-columns: 34px 38px 36px 36px 36px 16px 30px 20px;
    height:38px;
}
.para-right .ico{
    margin-right:3px;
}
.align-on{
    background-color: #c6c6c6;
}
.num-mark{
    font-size:8px;
    fill:#666;
}
.dir-a{
    font-size:12px;
    font-weight: bold;
    fill:#3f7cc0;
}

/* 绘图、编辑 */
.draw-body{
    padding-left:16px;
}
.gallery{
    display: flex;
    flex:none;
    width:226px;
    height:101px;
    margin-top:5px;
    border:1px solid #d0d0d0;
    background-color: #fff;
}
.shapes{
    display: grid;
    grid-template-columns: repeat(6,33px);
    grid-auto-rows: 33px;
    place-items: center;
    width:200px;
}
.gallery-scroll{
    display: flex;
    flex-direction: column;
    width:24px;
}
.gs{
    display: flex;
    align-items: center;
    justify-content: center;
    flex:1;
    border-left:1px solid #d8d8d8;
    border-bottom:1px solid #d8d8d8;
}
.gs .caret{
    margin:0;
}
.gs-up{
    background-color: #dcdcdc;
}
.gs-more{
    flex-direction: column;
    gap:3px;
    border-bottom:0;
}
.bar{
    width:10px;
    height:2px;
    background-color: #777;
}
.arrange{
    width:60px;
    margin-left:9px;
    padding-top:9px;
}
.arrange .big-label{
    margin-top:8px;
}
.quick{
    width:96px;
    padding-top:9px;
}
.quick .big-icon{
    margin-bottom:-2px;
}
.shape-style{
    flex:none;
}
.shape-style .ico{
    margin-right:3px;
}
.edit-col{
    padding-left:17px;
}
.edit-col .ico{
    margin-right:7px;
}
.abac{
    display: flex;
    flex-direction: column;
    width:26px;
    font-size:12px;
    line-height:15px;
    color:#555;
}
.abac b{
    font-weight: normal;
    color:#3f78c4;
}
.abac .ac{
    padding-left:5px;
    color:#5c6bb0;
}
.collapse{
    margin:134px 0 0 21px;
}

/* 主区域 */
.main{
    display: flex;
    height:793px;
}
.thumbs{
    flex:none;
    display: flex;
    flex-direction: column;
    gap:31px;
    width:312px;
    padding:32px 0 0 0;
    border-right:1px solid #cfcfcf;
    margin-bottom:3px;
}
.thumb-row{
    display: flex;
    height:125px;
    padding-left:20px;
}
.thumb-no{
    width:35px;
    font-size:24px;
    line-height:28px;
    margin-top:-6px;
    color:#555;
}
.thumb{
    display: block;
    width:217px;
    height:125px;
    background-color: #fff;
    border:1px solid #c9c9c9;
}
.thumb-current .thumb-no{
    color:#d9653a;
}
.thumb-current .thumb{
    border:0;
    outline:5px solid #ec7648;
    outline-offset:-1px;
}
.tb{
    fill:#3e6dbd;
    stroke:#2f528f;
    stroke-width:.5;
}
.tl{
    fill:none;
    stroke:#5b7dc0;
    stroke-width:1.600;
}
.tt{
    font-size:3.500px;
    fill:#e6ecf8;
    text-anchor: middle;
}
.tg{
    font-size:4px;
    fill:#888;
    text-anchor: middle;
}
.canvas{
    flex:1;
    display: flex;
    position: relative;
    border-bottom:5px solid #d8d8d8;
}
.slide{
    position: relative;
    flex:none;
    width:1323px;
    height:746px;
    margin:20px 0 0 196px;
    background-color: #fff;
    box-shadow: 0 0 0 1px #d6d6d6;
}
.links{
    position: absolute;
    left:0;
    top:0;
    z-index:2;
    overflow: visible;
}
.link path{
    fill:none;
    stroke:#5b7dc0;
    stroke-width:2;
}
.node{
    position: absolute;
    padding-top:14px;
    text-align: center;
    background-color: #4472c4;
    border:1.500px solid #2f528f;
    color:#fff;
    font-size:25px;
    font-weight:300;
    line-height:30px;
    white-space: nowrap;
}
.sq{
    text-decoration: underline wavy #d0342c 1px;
    text-underline-offset:3px;
}
.n-comment{
    left:509px;
    top:70px;
    width:814px;
    height:87px;
}
.n-cat3{
    left:172px;
    top:121px;
    width:182px;
    height:87px;
    padding-top:27px;
}
.n-comment-img{
    left:1110px;
    top:165px;
    width:243px;
    height:87px;
    z-index:1;
}
.n-spu{
    left:172px;
    top:285px;
    width:182px;
    height:90px;
    padding-top:15px;
}
.n-poster{
    left:610px;
    top:286px;
    width:238px;
    height:89px;
    padding-top:15px;
}
.n-user{
    left:1063px;
    top:346px;
    width:180px;
    height:88px;
    padding-top:28px;
}
.n-brandcat{
    left:458px;
    top:393px;
    width:303px;
    height:89px;
    padding-top:16px;
}
.n-sku{
    left:82px;
    top:558px;
    width:279px;
    height:88px;
    padding-top:13px;
}
.n-brand{
    left:599px;
    top:583px;
    width:455px;
    height:89px;
    padding-top:15px;
    border:1.500px dashed #2f528f;
    z-index:3;
}
.handle{
    position: absolute;
    width:17px;
    height:17px;
    background-color: #fff;
    border:3px solid #9a9a9a;
    border-radius:50%;
    margin:-9px 0 0 -9px;
}
.h-tl,.h-tc,.h-tr{
    top:0;
}
.h-ml,.h-mr{
    top:50%;
}
.h-bl,.h-bc,.h-br{
    top:100%;
}
.h-tl,.h-ml,.h-bl{
    left:0;
}
.h-tc,.h-bc{
    left:50%;
}
.h-tr,.h-mr,.h-br{
    left:100%;
}
.stem{
    position: absolute;
    left:50%;
    top:-38px;
    width:2px;
    height:30px;
    background-color: #b0b0b0;
}
.rotate{
    position: absolute;
    left:50%;
    top:-74px;
    margin-left:-18px;
}
.vscroll{
    position: absolute;
    right:0;
    top:6px;
    display: flex;
    flex-direction: column;
    width:23px;
}
.vs-btn{
    display: flex;
    flex:none;
    align-items: center;
    justify-content: center;
    height:24px;
    background-color: #fff;
    border:1px solid #cfcfcf;
    border-right:0;
}
.vs-track{
    flex:none;
    height:427px;
    background-color: #d9d9d9;
}
.vs-thumb{
    flex:none;
    height:211px;
    background-color: #fff;
    border:1px solid #b5b5b5;
    border-right:0;
    margin-bottom:2px;
}
.vs-page{
    display: flex;
    flex:none;
    flex-direction: column;
    align-items: center;
    justify-content: center;
    gap:1px;
    height:29px;
}
.vs-btn + .vs-page{
    margin-top:2px;
}
.tri{
    display: block;
    width:0;
    height:0;
    border-left:8px solid transparent;
    border-right:8px solid transparent;
}
.tri-up{
    border-bottom:6px solid #777;
}
.tri-down{
    border-top:6px solid #777;
}
.vs-btn .tri{
    border-left-width:9px;
    border-right-width:9px;
}

/* 状态栏 */
.status{
    display: flex;
    align-items: center;
    height:34px;
    padding-left:12px;
    background-color: #f2f2f2;
    border-top:1px solid #cdcdcd;
    font-size:19px;
}
.st-count{
    width:240px;
    word-spacing:2px;
    letter-spacing:.3px;
    white-space: nowrap;
}
.st-lang{
    margin-left:27px;
}
.st-right{
    display: flex;
    align-items: center;
    height:100%;
    margin-left:913px;
}
.st-btn{
    display: flex;
    align-items: center;
    gap:8px;
    margin-right:30px;
    white-space: nowrap;
}
.view{
    display: flex;
    align-items: center;
    justify-content: center;
    width:58px;
    height:100%;
}
.view-on{
    background-color: #c6c6c6;
}

/* 输入法 */
.ime{
    position: absolute;
    left:1753px;
    top:1052px;
    display: flex;
    align-items: center;
    gap:10px;
    width:267px;
    height:33px;
    padding-left:8px;
    background-color: #fff;
    border:1px solid #ccc;
    color:#1f6fb8;
    z-index:4;
}
.ime-zh{
    width:24px;
    font-size:23px;
    font-weight: bold;
    line-height:1;
}
.ime-punct{
    width:24px;
    margin-left:-2px;
    font-size:24px;
    font-weight: bold;
    line-height:1;
}
.ime-shirt,.ime-grid{
    margin-left:-3px;
}
.sogou{
    position: absolute;
    left:1714px;
    top:1045px;
    width:38px;
    height:37px;
    background-color: #ec6b24;
    border-radius:6px;
    transform: rotate(-14deg);
    color:#fff;
    font-size:38px;
    font-weight:900;
    line-height:37px;
    text-align: center;
    z-index:5;
}
.badge{
    position: absolute;
    left:2021px;
    top:1009px;
    width:76px;
    height:76px;
    padding:26px 0 0 7px;
    border-radius:50%;
    background: radial-gradient(circle at 50% 60%,#48b86a,#2e9a4e 70%,#8ed8a4);
    color:#fff;
    font-family: "DejaVu Sans Mono", monospace;
    font-size:20px;
    font-weight: bold;
    line-height:24px;
    z-index:5;
}
.spot{
    position: absolute;
    left:1051px;
    top:972px;
    width:86px;
    height:86px;
    border-radius:50%;
    background-color: #fdec00;
    z-index:6;
}
.pointer{
    position: absolute;
    left:1096px;
    top:1015px;
    z-index:7;
}
```
